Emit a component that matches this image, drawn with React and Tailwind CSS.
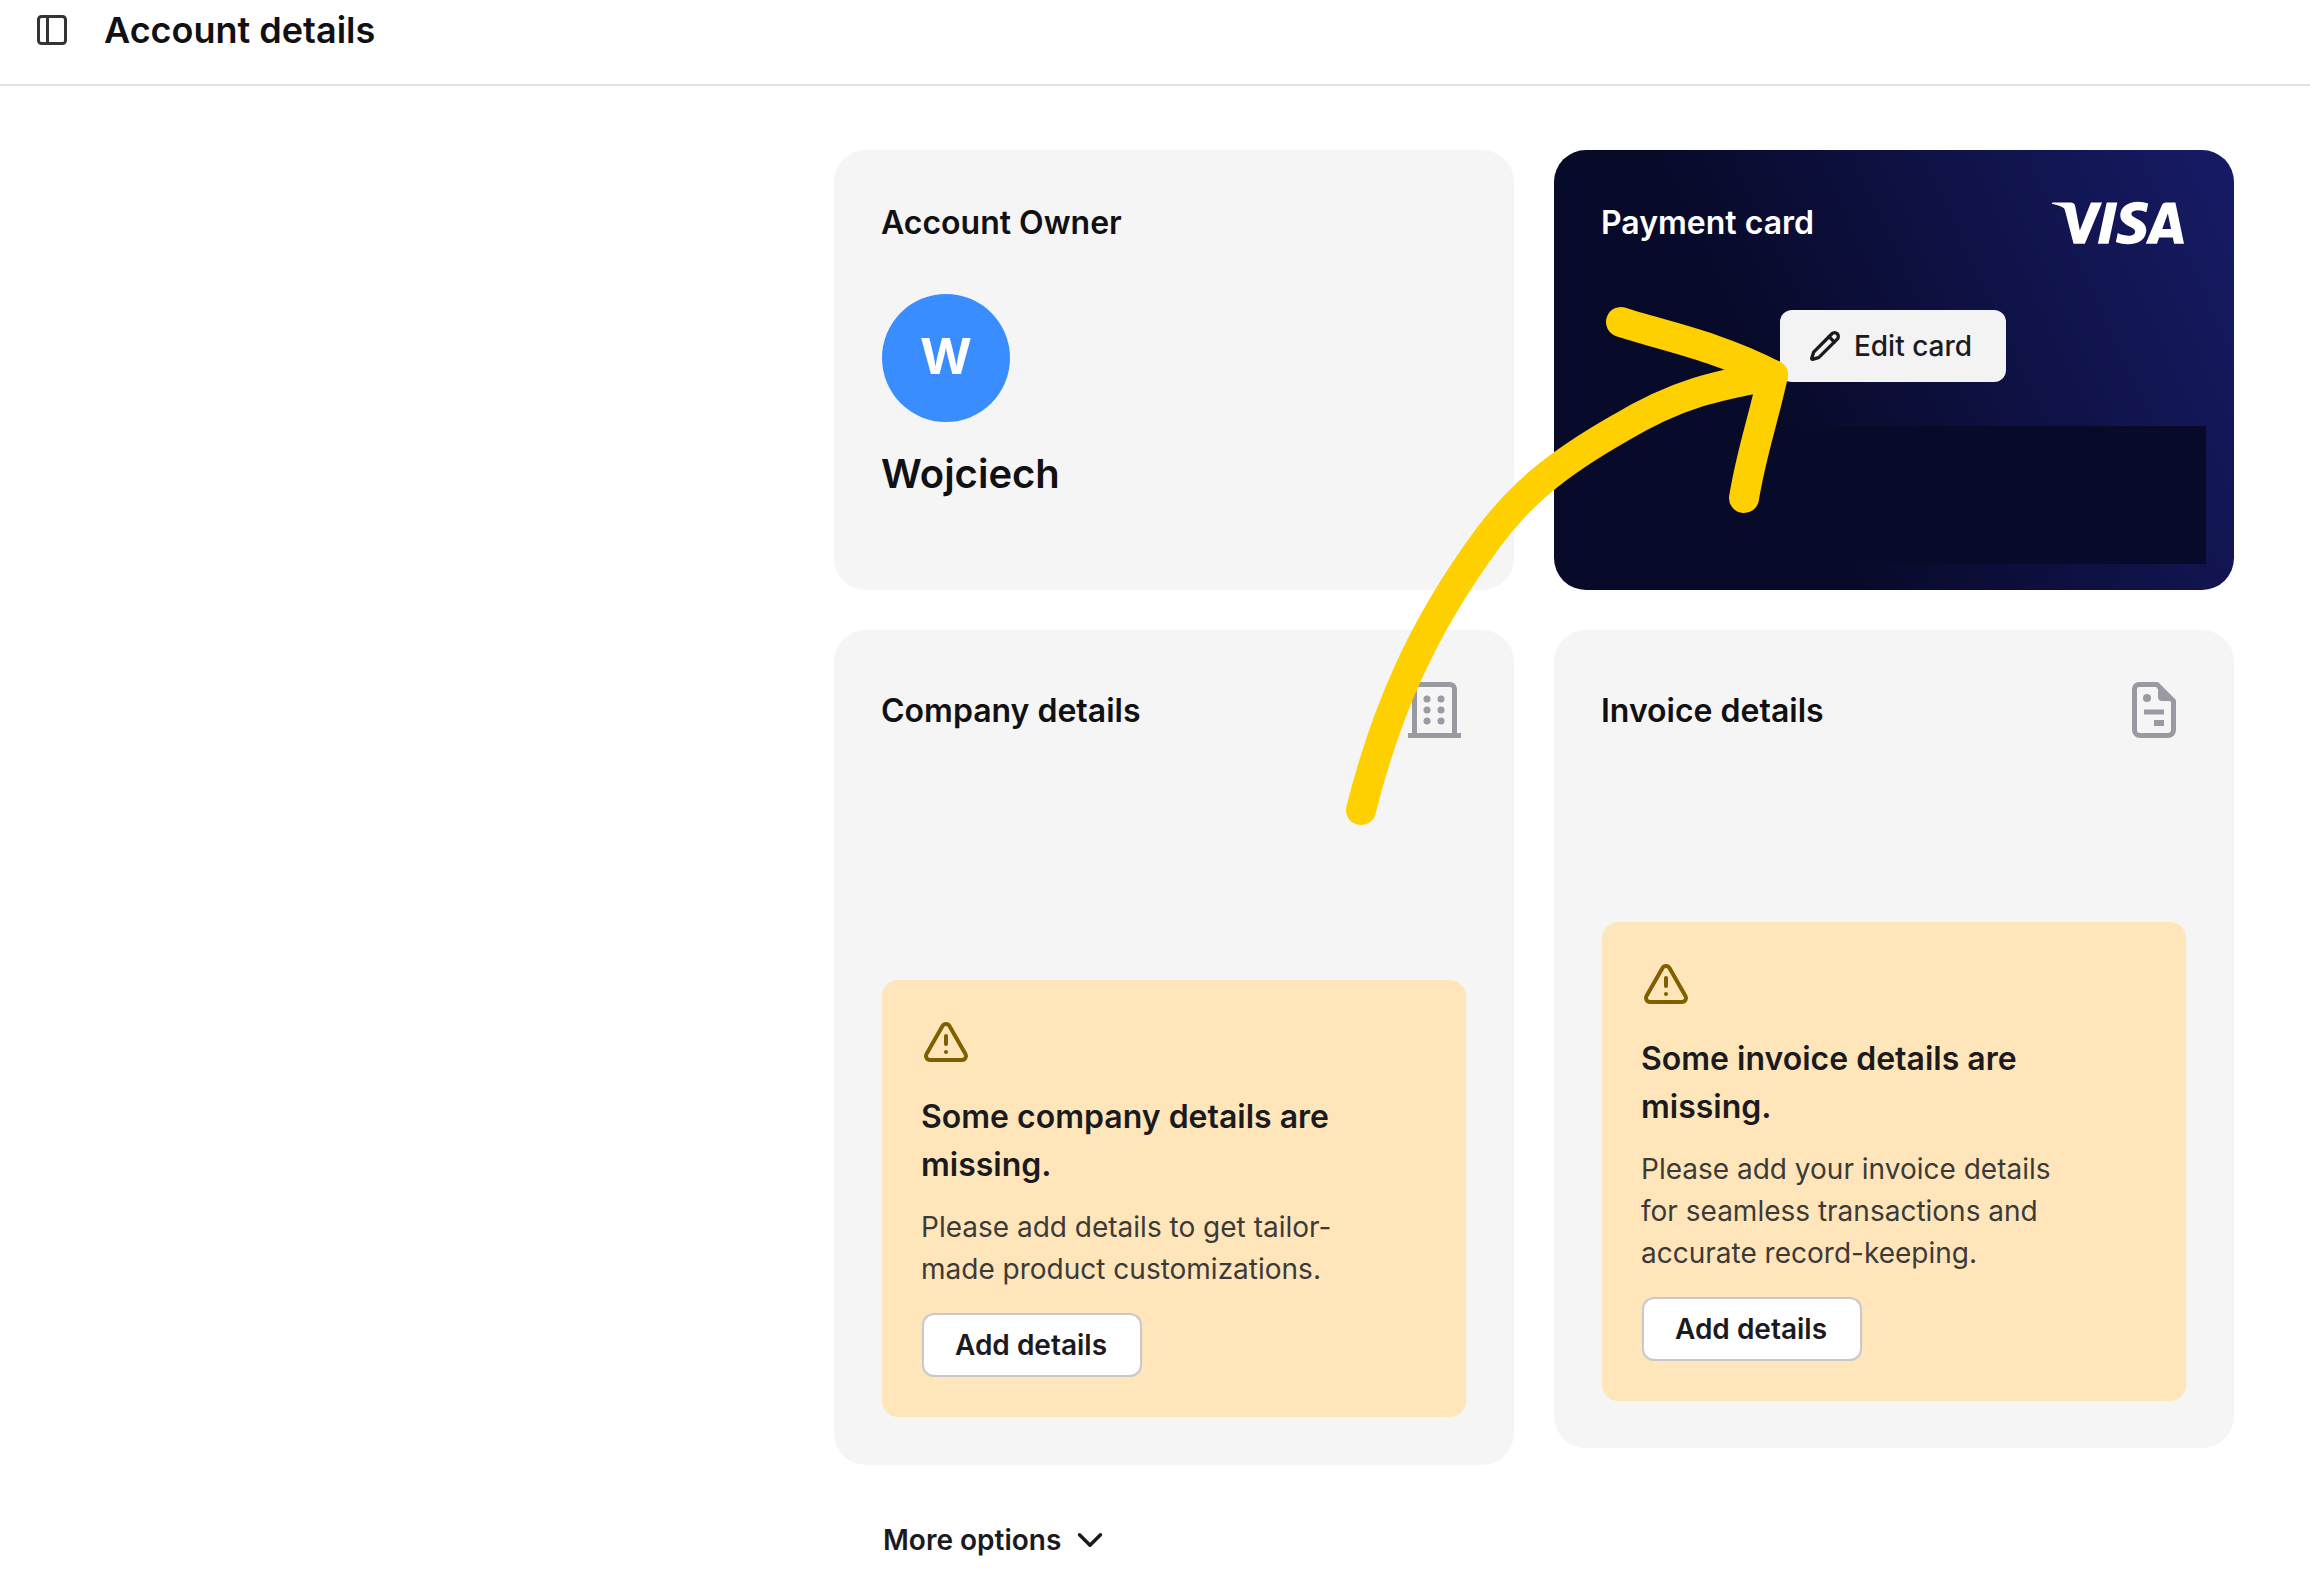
import { ChevronDown, PanelLeft, Pencil, TriangleAlert } from 'lucide-react'
import { SiVisa } from 'react-icons/si'

function BuildingIcon() {
  return (
    <svg width="53" height="56" viewBox="0 0 53 56" fill="none" stroke="#9a9aa3" strokeWidth="5">
      <path d="M6.5 53V7a4.5 4.5 0 0 1 4.5-4.5h31A4.5 4.5 0 0 1 46.500 7v46" />
      <path d="M0 53.500h53" strokeWidth="5" />
      <g fill="#9a9aa3" stroke="none">
        <circle cx="19" cy="17" r="3.5" />
        <circle cx="33" cy="17" r="3.500" />
        <circle cx="19" cy="28" r="3.500" />
        <circle cx="33" cy="28" r="3.500" />
        <circle cx="19" cy="39" r="3.500" />
        <circle cx="33" cy="39" r="3.500" />
      </g>
    </svg>
  )
}

function InvoiceIcon() {
  return (
    <svg width="44" height="56" viewBox="0 0 44 56" fill="none" stroke="#9a9aa3" strokeWidth="5">
      <path d="M7 2.500h18L41.500 19v29a5.500 5.500 0 0 1-5.500 5.500H8A5.500 5.500 0 0 1 2.500 48V7A4.500 4.500 0 0 1 7 2.500Z" strokeLinejoin="round" />
      <path d="M26 3v12a4 4 0 0 0 4 4h11Z" fill="#9a9aa3" stroke="none" />
      <path d="M12 30h20" />
      <path d="M22 41h10" strokeWidth="6" />
      <circle cx="15" cy="16" r="4" fill="#9a9aa3" stroke="none" />
    </svg>
  )
}

function Notice({ title, lines }) {
  return (
    <div className="rounded-[16px] bg-[#ffe6ba] pl-10 pr-6 pt-[38px] pb-10">
      <TriangleAlert size={48} strokeWidth={2} className="text-[#7f5f00]" />
      <h3 className="-ml-px mt-[27px] text-[32px] leading-[48px] font-semibold text-[#1b1b1f]">{title}</h3>
      <p className="-ml-px mt-[17px] text-[28px] leading-[42px] text-[#3c3a38]">
        {lines.map((line) => (
          <span key={line} className="block">{line}</span>
        ))}
      </p>
      <button className="mt-[23px] flex h-[64px] w-[220px] items-center justify-center rounded-[12px] border-2 border-[#c8c8ce] bg-white pr-[2px] text-[28px] font-semibold text-[#1b1b1f]">
        Add details
      </button>
    </div>
  )
}

export default function App() {
  return (
    <div className="relative h-[1580px] overflow-hidden bg-white font-['Inter',sans-serif] text-[#111114]">
      <header className="flex h-[86px] items-start gap-[34px] border-b-2 border-[#e3e3e3] pl-[34px]">
        <PanelLeft size={36} strokeWidth={2} className="mt-[12px] text-[#333338]" />
        <h1 className="text-[36px] leading-[60px] font-semibold">Account details</h1>
      </header>

      <main className="flex justify-end pr-[76px] pt-[64px]">
        <div className="w-[1400px]">
          <div className="grid grid-cols-2 gap-[40px]">
            <section className="h-[440px] rounded-[32px] bg-[#f5f5f5] p-[48px]">
              <h2 className="-ml-px text-[32px] leading-[50px] font-semibold">Account Owner</h2>
              <div className="mt-[46px] flex size-[128px] items-center justify-center rounded-full bg-[#3a8dff] pb-[3px] text-[50px] font-bold text-white">
                W
              </div>
              <p className="-ml-px mt-[22px] text-[40px] leading-[60px] font-semibold">Wojciech</p>
            </section>

            <section className="h-[440px] rounded-[32px] bg-[linear-gradient(65deg,#080a2a_35%,#171b66_100%)] pt-[48px]">
              <div className="flex h-[50px] items-center justify-between pl-[47px] pr-[50px]">
                <h2 className="text-[32px] font-semibold text-white">Payment card</h2>
                <SiVisa size={132} className="-my-[40px] text-white" />
              </div>
              <button className="mx-auto mt-[62px] flex h-[72px] w-[226px] -translate-x-px items-center justify-center gap-[13px] rounded-[12px] bg-[#f3f3f3] pr-[5px] text-[28px] font-medium text-[#1b1b1f]">
                <Pencil size={32} strokeWidth={2.5} />
                Edit card
              </button>
              <div className="mx-[28px] mt-[44px] h-[138px] bg-[#080a2a]" />
            </section>
          </div>

          <div className="mt-[40px] grid grid-cols-2 items-start gap-[40px]">
            <section className="rounded-[32px] bg-[#f5f5f5] px-[48px] pt-[48px] pb-[48px]">
              <div className="flex h-[65px] items-start justify-between pr-[5px]">
                <h2 className="-ml-px text-[32px] leading-[65px] font-semibold">Company details</h2>
                <div className="mt-[4px]"><BuildingIcon /></div>
              </div>
              <div className="mt-[237px]">
                <Notice
                  title={<>Some company details are<br />missing.</>}
                  lines={['Please add details to get tailor-', 'made product customizations.']}
                />
              </div>
            </section>

            <section className="rounded-[32px] bg-[#f5f5f5] px-[48px] pt-[48px] pb-[47px]">
              <div className="flex h-[65px] items-start justify-between">
                <h2 className="-ml-px text-[32px] leading-[65px] font-semibold">Invoice details</h2>
                <div className="mr-[10px] mt-[4px]"><InvoiceIcon /></div>
              </div>
              <div className="mt-[179px]">
                <Notice
                  title={<>Some invoice details are<br />missing.</>}
                  lines={['Please add your invoice details', 'for seamless transactions and', 'accurate record-keeping.']}
                />
              </div>
            </section>
          </div>

          <button className="mt-[54px] ml-[49px] flex items-center gap-[8px] text-[28px] font-semibold text-[#1b1b1f]">
            More options
            <ChevronDown size={42} strokeWidth={2} className="-my-[8px]" />
          </button>
        </div>
      </main>

      {/* hand drawn annotation on top of the page */}
      <svg className="pointer-events-none absolute left-0 top-0" width="2310" height="1580" viewBox="0 0 2310 1580" fill="none" stroke="#ffd000" strokeWidth="30" strokeLinecap="round" strokeLinejoin="round">
        <path d="M1361 810C1385 715 1420 630 1488 538C1520 495 1555 465 1620 428C1680 392 1720 385 1773 375" />
        <path d="M1621 322C1660 335 1715 345 1773 375C1762 425 1752 450 1744 498" />
      </svg>
    </div>
  )
}
